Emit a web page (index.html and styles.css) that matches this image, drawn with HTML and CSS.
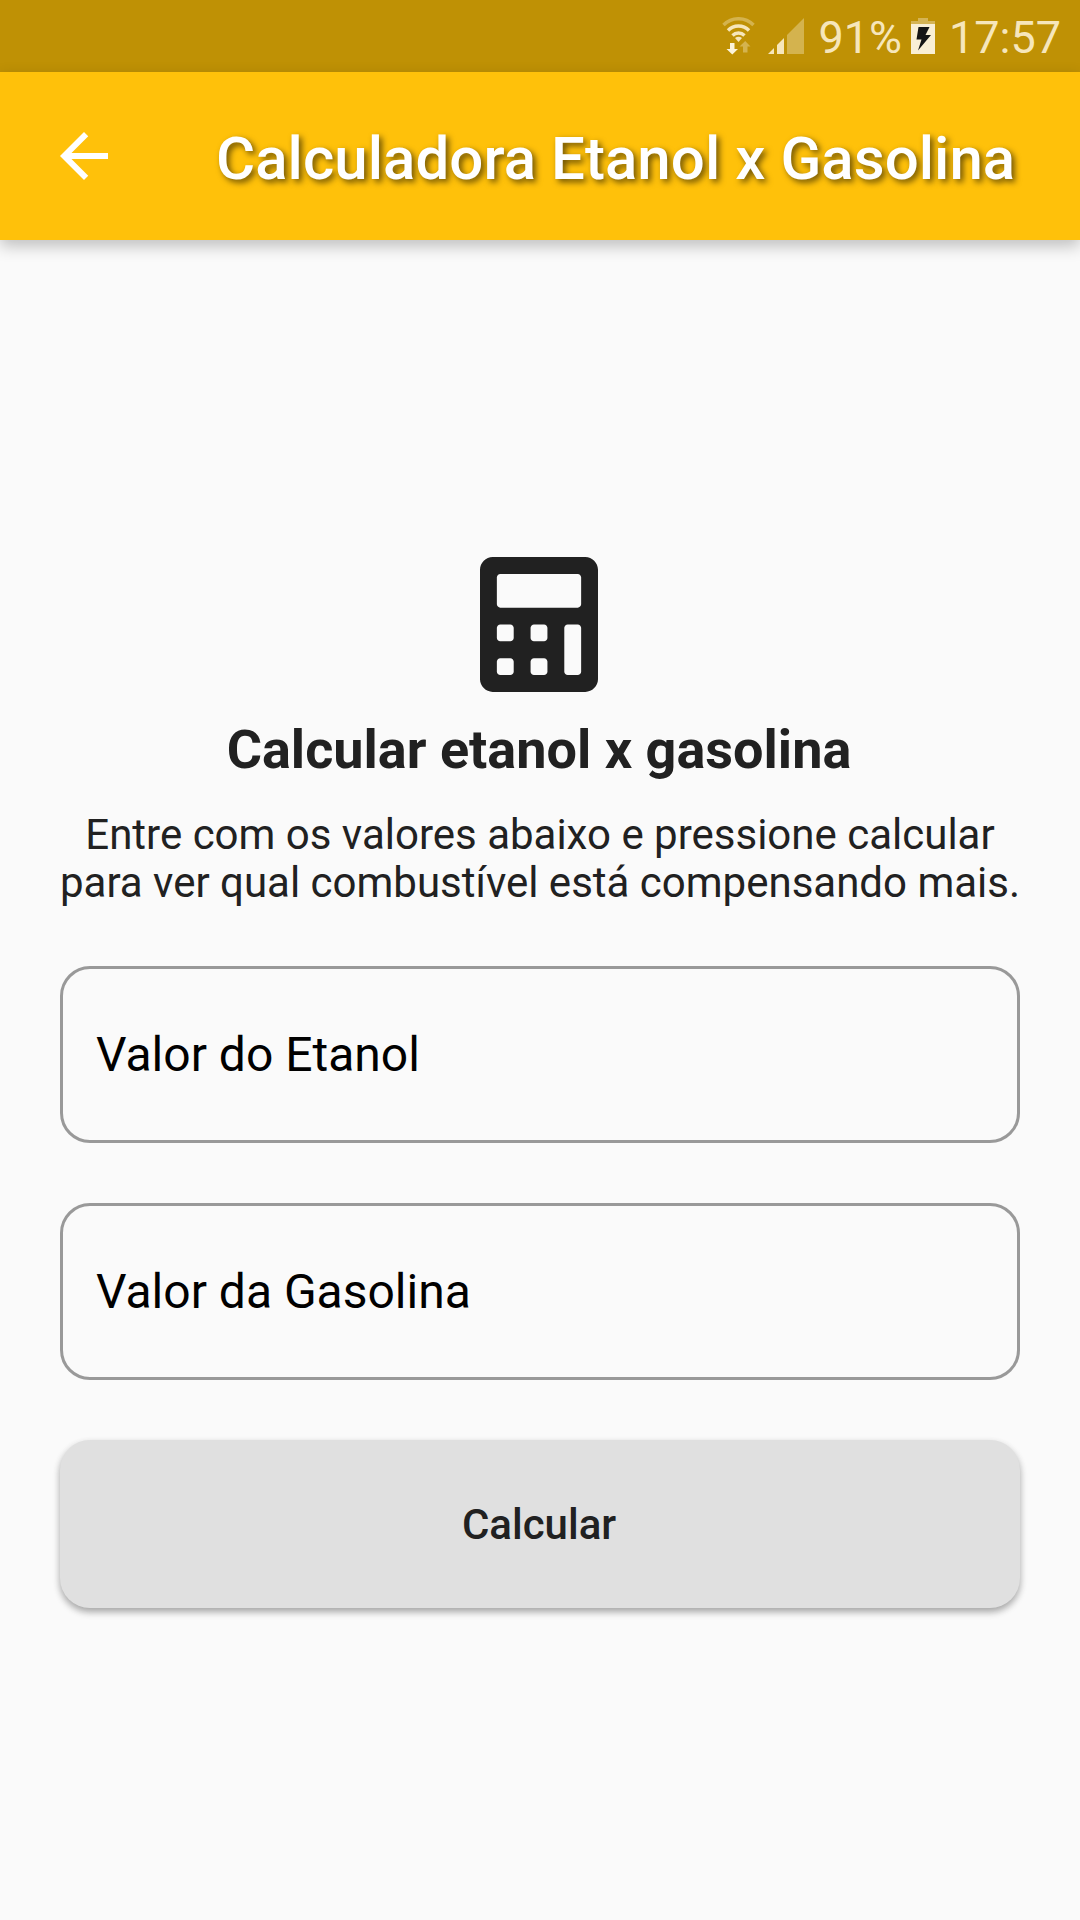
FILE: index.html
```html
<!DOCTYPE html>
<html lang="pt-BR">

<head>
    <meta charset="UTF-8">
    <meta name="viewport" content="width=device-width, initial-scale=1.0">
    <title>Calculadora Etanol x Gasolina</title>
    <link rel="stylesheet" href="styles.css">
</head>

<body>
    <div class="status-bar">
        <svg class="wifi" width="34" height="38" viewBox="0 0 34 38">
            <g fill="none" stroke="#f6e6bb" stroke-width="3.4">
                <path d="M1.500 8A21 21 0 0 1 31.500 8" opacity="0.4" />
                <path d="M6 13.500A14.500 14.500 0 0 1 27 13.500" />
                <path d="M10.500 18.500A8.500 8.500 0 0 1 22.500 18.500" />
            </g>
            <path d="M13 21Q16.500 18.500 20 21L16.500 25Z" fill="#f6e6bb" />
            <path d="M8 26h4.500v6h3.500l-5.700 5.500L4.500 32H8z" fill="#fbf3dc" />
            <path d="M21 35.500h4.500v-6h3L23.200 24l-5.700 5.500H21z" fill="#f6e6bb" opacity="0.4" />
        </svg>
        <svg class="signal" width="36" height="36" viewBox="0 0 36 36">
            <path d="M0 36L6 30V36Z" fill="#f6e6bb" />
            <path d="M9 27L16 20V36H9Z" fill="#f6e6bb" />
            <path d="M19 17L36 0V36H19Z" fill="#f6e6bb" opacity="0.4" />
        </svg>
        <span class="percent">91%</span>
        <svg class="battery" width="24" height="36" viewBox="0 0 24 36">
            <path d="M7 0H17V3H24V6H0V3H7Z" fill="#d5b455" />
            <path d="M0 6H24V36H0Z" fill="#f9efd5" />
            <path d="M7.500 9H18.500L14.500 17H20L7 32.500L10.500 21.500H5.500Z" fill="#151515" />
        </svg>
        <span class="clock">17:57</span>
    </div>

    <header class="app-bar">
        <svg class="back" width="72" height="72" viewBox="0 0 24 24">
            <path d="M20 11H7.830l5.590-5.590L12 4l-8 8 8 8 1.410-1.410L7.830 13H20v-2z" fill="#fff" />
        </svg>
        <h1 class="title">Calculadora Etanol x Gasolina</h1>
    </header>

    <main class="content">
        <svg class="calculator" width="118" height="135" viewBox="0 0 448 512">
            <path d="M400 0H48C22.400 0 0 22.400 0 48v416c0 25.600 22.400 48 48 48h352c25.600 0 48-22.400 48-48V48c0-25.600-22.400-48-48-48zM128 435.200c0 6.400-6.400 12.800-12.800 12.800H76.800c-6.400 0-12.800-6.400-12.800-12.800v-38.400c0-6.400 6.400-12.800 12.800-12.800h38.400c6.400 0 12.800 6.400 12.800 12.800v38.400zm0-128c0 6.400-6.400 12.800-12.800 12.800H76.800c-6.400 0-12.800-6.400-12.800-12.800v-38.400c0-6.400 6.400-12.800 12.800-12.800h38.400c6.400 0 12.800 6.400 12.800 12.800v38.400zm128 128c0 6.400-6.400 12.800-12.800 12.800h-38.400c-6.400 0-12.800-6.400-12.800-12.800v-38.400c0-6.400 6.400-12.800 12.800-12.800h38.400c6.400 0 12.800 6.400 12.800 12.800v38.400zm0-128c0 6.400-6.400 12.800-12.800 12.800h-38.400c-6.400 0-12.800-6.400-12.800-12.800v-38.400c0-6.400 6.400-12.800 12.800-12.800h38.400c6.400 0 12.800 6.400 12.800 12.800v38.400zm128 128c0 6.400-6.400 12.800-12.800 12.800h-38.400c-6.400 0-12.800-6.400-12.800-12.800V268.800c0-6.400 6.400-12.800 12.800-12.800h38.400c6.400 0 12.800 6.400 12.800 12.800v166.400zm0-256c0 6.400-6.400 12.800-12.800 12.800H76.800c-6.400 0-12.800-6.400-12.800-12.800V76.800C64 70.400 70.400 64 76.800 64h294.400c6.400 0 12.800 6.400 12.800 12.800v102.400z" fill="#212121" />
        </svg>
        <h2 class="heading">Calcular etanol x gasolina</h2>
        <p class="description">Entre com os valores abaixo e pressione calcular<br>para ver qual combustível está compensando mais.</p>
        <input class="field" type="text" inputmode="decimal" placeholder="Valor do Etanol">
        <input class="field" type="text" inputmode="decimal" placeholder="Valor da Gasolina">
        <button class="submit">Calcular</button>
    </main>
</body>

</html>
```
FILE: styles.css
```css
* {
    box-sizing: border-box;
}

body {
    font-family: Roboto, sans-serif;
    margin: 0;
    min-height: 100vh;
    display: flex;
    flex-direction: column;
    background-color: #fafafa;
    color: #212121;
}

svg {
    display: block;
    flex-shrink: 0;
}

.status-bar {
    display: flex;
    align-items: center;
    justify-content: flex-end;
    height: 72px;
    padding-right: 19px;
    background-color: #bf9105;
    color: #f6e6bb;
    font-size: 45px;
    line-height: 72px;
}

.wifi {
    margin-right: 12px;
}

.signal {
    margin-right: 14px;
}

.percent {
    padding-top: 3px;
}

.battery {
    margin: 0 14px 0 9px;
}

.clock {
    padding-top: 3px;
}

.app-bar {
    display: flex;
    align-items: center;
    height: 168px;
    padding: 0 48px;
    background-color: #ffc10a;
    box-shadow: 0 6px 15px rgba(0, 0, 0, 0.24);
}

.back {
    margin-right: 96px;
}

.title {
    margin: 0;
    padding-top: 4px;
    font-size: 60px;
    font-weight: 500;
    letter-spacing: 0.05px;
    color: #fff;
    white-space: nowrap;
    text-shadow: 3px 3px 6px rgba(0, 0, 0, 0.6);
}

.content {
    flex: 1;
    display: flex;
    flex-direction: column;
    padding: 317px 60px 0;
}

.calculator {
    align-self: center;
    margin: 0 2px 26px 0;
}

.heading {
    margin: 0 2px 30px 0;
    font-size: 54px;
    font-weight: 700;
    line-height: 63px;
    text-align: center;
}

.description {
    margin: 0 -20px 59px;
    font-size: 42px;
    line-height: 48px;
    text-align: center;
}

.field {
    width: 100%;
    height: 177px;
    margin: 0 0 60px;
    padding: 0 33px;
    border: 3px solid #999;
    border-radius: 30px;
    background: none;
    font-family: inherit;
    font-size: 48px;
    outline: none;
}

.field::placeholder {
    color: #000;
    opacity: 1;
}

.submit {
    height: 168px;
    padding: 0 2px 0 0;
    border: none;
    border-radius: 30px;
    background-color: #e0e0e0;
    color: #212121;
    font-family: inherit;
    font-size: 42px;
    font-weight: 500;
    box-shadow: 0 4px 7px rgba(0, 0, 0, 0.3), 0 3px 9px rgba(0, 0, 0, 0.06);
}
```
